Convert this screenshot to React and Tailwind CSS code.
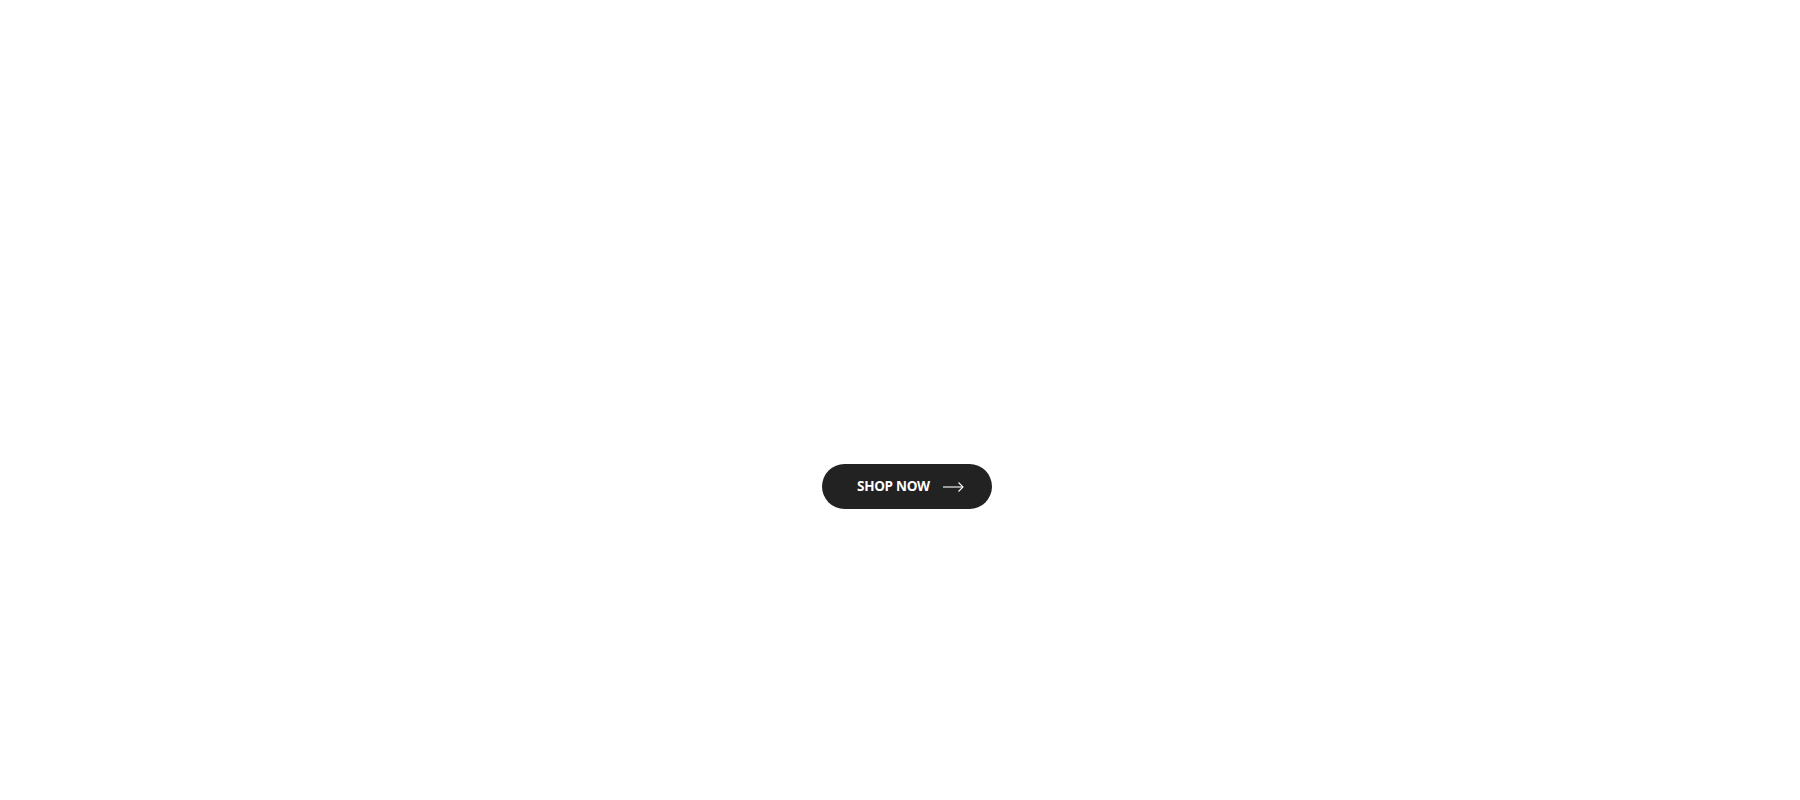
const ArrowRight = () => (
  <svg width="21" height="10" viewBox="0 0 21 10" fill="none" stroke="currentColor" strokeWidth="1.1">
    <path d="M0 5h20" />
    <path d="M15.5 0.5L20 5l-4.5 4.5" />
  </svg>
);

const App = () => {
  return (
    <div className="min-h-[800px] bg-white pt-[464px] flex justify-center pl-[14px]" style={{ fontFamily: '"Open Sans", sans-serif' }}>
      <div>
        <button className="h-[45px] w-[170px] rounded-full bg-[#222222] text-white flex items-center pl-[35px] gap-[13px]">
          <span className="text-[13.5px] font-bold uppercase tracking-[-0.3px] leading-none">Shop Now</span>
          <ArrowRight />
        </button>
      </div>
    </div>
  );
};

export default App;
